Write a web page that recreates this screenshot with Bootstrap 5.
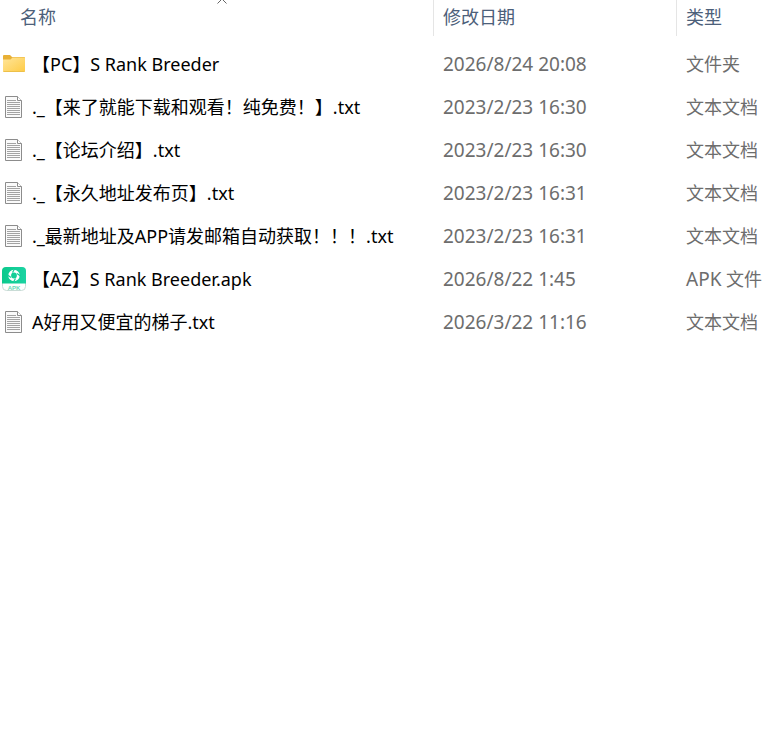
<!DOCTYPE html>
<html lang="zh-CN">
<head>
<meta charset="utf-8">
<meta name="viewport" content="width=device-width, initial-scale=1">
<title>文件列表</title>
<link href="https://cdn.jsdelivr.net/npm/bootstrap@5.3.0/dist/css/bootstrap.min.css" rel="stylesheet">
<style>
body { font-family: "Noto Sans", "Noto Sans CJK SC", sans-serif; font-size: 18px; line-height: 24px; color: #000; background: #fff; }
.file-table { table-layout: fixed; border-collapse: collapse; }
.col-date { width: 243px; }
.col-type { width: 86px; }
.file-table th { padding: 0 0 6px; font-weight: 400; }
.file-table td { height: 43px; padding: 0; vertical-align: middle; white-space: nowrap; }
.head-cell { height: 36px; border-left: 1px solid #e5e5e5; }
.head-first { margin-left: 10px; border-left: 0; }
.head-btn { padding: 0 9px 2px; border: 0; background: none; color: #4c607a; text-align: left; }
.head-first .head-btn { padding-left: 10px; }
.file-name { padding-left: 2px; gap: 6px; }
.file-table td.meta { padding-left: 10px; color: #6d6d6d; }
.lat { font-size: 19px; }
</style>
</head>
<body class="overflow-x-hidden">
<svg class="position-absolute" width="0" height="0" aria-hidden="true">
  <defs>
    <linearGradient id="fold" x1="0" y1="0" x2="1" y2="1"><stop offset="0" stop-color="#ffe59a"/><stop offset="1" stop-color="#fecb45"/></linearGradient>
    <linearGradient id="green" x1="0" y1="0" x2="1" y2="0"><stop offset="0" stop-color="#0bc98c"/><stop offset="1" stop-color="#1bd3a2"/></linearGradient>
  </defs>
  <symbol id="doc" viewBox="0 0 24 24">
    <path d="M3.500 1.500h12l4 4v17h-16z" fill="#fafafa" stroke="#8c8c8c"/>
    <path d="M15.500 1.500v4h4" fill="#fff" stroke="#8c8c8c"/>
    <path d="M5 5.500h9M5 7.500h13M5 9.500h13M5 11.500h13M5 13.500h13M5 15.500h13M5 17.500h13M5 19.500h13" stroke="#a3a3a3" fill="none"/>
  </symbol>
</svg>
<main>
<table class="file-table w-100">
  <colgroup><col><col class="col-date"><col class="col-type"></colgroup>
  <thead>
    <tr>
      <th scope="col" aria-sort="ascending">
        <div class="head-cell head-first position-relative">
          <svg class="position-absolute top-0 start-50 translate-middle-x" width="12" height="4" viewBox="0 0 12 4" fill="none" stroke="#666" aria-hidden="true"><path d="M1.500 3.500L6-1l4.500 4.500"/></svg>
          <button type="button" class="head-btn w-100 h-100">名称</button>
        </div>
      </th>
      <th scope="col"><div class="head-cell"><button type="button" class="head-btn w-100 h-100">修改日期</button></div></th>
      <th scope="col"><div class="head-cell"><button type="button" class="head-btn w-100 h-100">类型</button></div></th>
    </tr>
  </thead>
  <tbody>
    <tr>
      <td><div class="file-name d-flex align-items-center">
        <svg class="flex-shrink-0" width="24" height="24" viewBox="0 0 24 24" aria-hidden="true"><path d="M1 4a1 1 0 0 1 1-1h6l2 2h12a1 1 0 0 1 1 1V9H1z" fill="#e8b035"/><path d="M1 7.500h7.500l2-2H22a1 1 0 0 1 1 1V19a1 1 0 0 1-1 1H2a1 1 0 0 1-1-1z" fill="url(#fold)"/><path d="M1.500 19.500h21" stroke="#edc04a"/></svg>
        <span>【PC】S Rank Breeder</span></div></td>
      <td class="meta lat">2026/8/24 20:08</td><td class="meta">文件夹</td>
    </tr>
    <tr>
      <td><div class="file-name d-flex align-items-center"><svg class="flex-shrink-0" width="24" height="24" aria-hidden="true"><use href="#doc"/></svg><span>._【来了就能下载和观看！纯免费！】.txt</span></div></td>
      <td class="meta lat">2023/2/23 16:30</td><td class="meta">文本文档</td>
    </tr>
    <tr>
      <td><div class="file-name d-flex align-items-center"><svg class="flex-shrink-0" width="24" height="24" aria-hidden="true"><use href="#doc"/></svg><span>._【论坛介绍】.txt</span></div></td>
      <td class="meta lat">2023/2/23 16:30</td><td class="meta">文本文档</td>
    </tr>
    <tr>
      <td><div class="file-name d-flex align-items-center"><svg class="flex-shrink-0" width="24" height="24" aria-hidden="true"><use href="#doc"/></svg><span>._【永久地址发布页】.txt</span></div></td>
      <td class="meta lat">2023/2/23 16:31</td><td class="meta">文本文档</td>
    </tr>
    <tr>
      <td><div class="file-name d-flex align-items-center"><svg class="flex-shrink-0" width="24" height="24" aria-hidden="true"><use href="#doc"/></svg><span>._最新地址及APP请发邮箱自动获取！！！.txt</span></div></td>
      <td class="meta lat">2023/2/23 16:31</td><td class="meta">文本文档</td>
    </tr>
    <tr>
      <td><div class="file-name d-flex align-items-center">
        <svg class="flex-shrink-0" width="24" height="24" viewBox="0 0 24 24" aria-hidden="true"><rect x=".5" y=".5" width="23" height="23" rx="4" fill="#fff" stroke="#c9dcd6"/><path d="M0 16.500V4a4 4 0 0 1 4-4h16a4 4 0 0 1 4 4v12.500z" fill="url(#green)"/><circle cx="12" cy="8.500" r="4.300" fill="none" stroke="#fff" stroke-width="2.800"/><path d="M5.500 8l3.500 2.500M12.500 2l-2 3.500M18.500 9L15 6.500M11.500 15l2-3.500" stroke="#12ce97" stroke-width="1.200"/><text x="12" y="22.500" text-anchor="middle" font-family="Liberation Sans, sans-serif" font-size="6" font-weight="700" fill="#69d9b7">APK</text></svg>
        <span>【AZ】S Rank Breeder.apk</span></div></td>
      <td class="meta lat">2026/8/22 1:45</td><td class="meta"><span class="lat">APK</span> 文件</td>
    </tr>
    <tr>
      <td><div class="file-name d-flex align-items-center"><svg class="flex-shrink-0" width="24" height="24" aria-hidden="true"><use href="#doc"/></svg><span>A好用又便宜的梯子.txt</span></div></td>
      <td class="meta lat">2026/3/22 11:16</td><td class="meta">文本文档</td>
    </tr>
  </tbody>
</table>
</main>
<script src="https://cdn.jsdelivr.net/npm/bootstrap@5.3.0/dist/js/bootstrap.bundle.min.js"></script>
</body>
</html>
